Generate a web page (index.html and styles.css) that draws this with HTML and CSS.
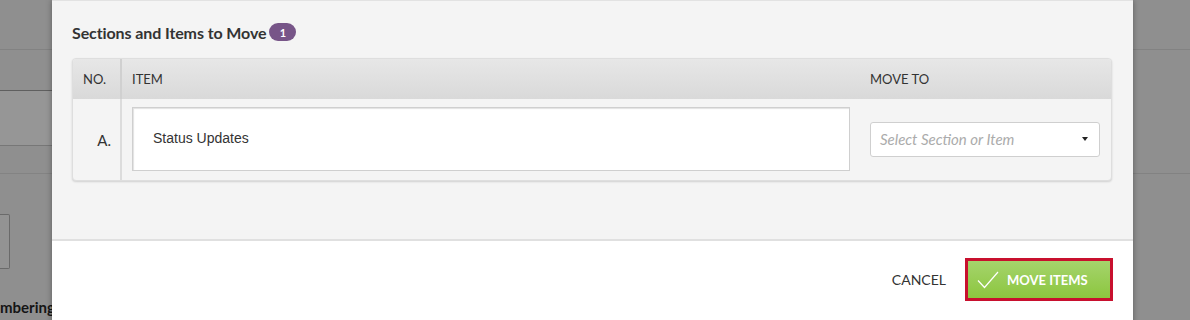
FILE: index.html
```html
<!DOCTYPE html>
<html>
<head>
<meta charset="utf-8">
<link rel="stylesheet" href="styles.css">
</head>
<body>
<div class="page">
  <div class="bg-left">
    <div class="bg-row r1"></div>
    <div class="bg-row r2"></div>
    <div class="bg-row r3"></div>
    <div class="bg-row r4"></div>
    <div class="bg-input"></div>
    <div class="bg-label">mbering</div>
  </div>
  <div class="bg-mid"></div>
  <div class="bg-right">
    <div class="bg-row r1"></div>
    <div class="bg-row rr2"></div>
  </div>
</div>

<div class="modal">
  <div class="modal-body">
    <div class="title">Sections and Items to Move <span class="badge">1</span></div>
    <div class="table">
      <div class="thead">
        <div class="cell c-no">NO.</div>
        <div class="cell c-item">ITEM</div>
        <div class="cell c-move">MOVE TO</div>
      </div>
      <div class="trow">
        <div class="cell c-no num">A.</div>
        <div class="cell c-item">
          <div class="item-box">Status Updates</div>
        </div>
        <div class="cell c-move">
          <div class="select">
            <span class="placeholder">Select Section or Item</span>
            <span class="caret"></span>
          </div>
        </div>
      </div>
    </div>
  </div>
  <div class="modal-footer">
    <span class="cancel">CANCEL</span>
    <div class="btn-outline">
      <div class="btn">
        <svg class="check" width="22" height="18" viewBox="0 0 22 18"><path d="M1 9.5 L7.5 16.5 L21 1" fill="none" stroke="#fff" stroke-width="1.2"/></svg>
        <span>MOVE ITEMS</span>
      </div>
    </div>
  </div>
</div>
</body>
</html>
```

FILE: styles.css
```css
html, body {
  margin: 0;
  padding: 0;
}
body {
  width: 1190px;
  height: 320px;
  overflow: hidden;
  background: #8f8f8f;
  font-family: Lato, "Open Sans", sans-serif;
  position: relative;
}
.page {
  display: flex;
  height: 320px;
}
.bg-left {
  width: 52px;
  display: flex;
  flex-direction: column;
  overflow: hidden;
}
.bg-mid { flex: 1; }
.bg-right {
  width: 57px;
  display: flex;
  flex-direction: column;
}
.bg-row { box-sizing: border-box; }
.r1 { height: 50px; border-bottom: 1px solid #828282; }
.r2 { height: 41px; border-bottom: 1px solid #5f5f5f; }
.r3 { height: 55px; background: #969696; border-bottom: 1px solid #777; }
.r4 { height: 28px; border-bottom: 1px solid #838383; }
.rr2 { height: 124px; border-bottom: 1px solid #828282; }
.bg-input {
  margin-top: 40px;
  width: 10px;
  height: 55px;
  box-sizing: border-box;
  border: 1px solid #6a6a6a;
  border-left: none;
  border-radius: 0 2px 2px 0;
  background: #939393;
}
.bg-label {
  margin-top: 29px;
  margin-left: 0;
  font-weight: 700;
  font-size: 15px;
  color: #151515;
  white-space: nowrap;
}

.modal {
  position: absolute;
  left: 52px;
  top: 0;
  width: 1081px;
  height: 330px;
  background: #fff;
  box-shadow: 0 0 6px rgba(0,0,0,0.35);
  display: flex;
  flex-direction: column;
}
.modal-body {
  background: #f4f4f4;
  height: 238px;
  border-top: 1px solid #e2e2e2;
  border-bottom: 2px solid #e0e0e0;
  padding: 0 21px 0 20px;
  box-sizing: content-box;
}
.title {
  margin-top: 20px;
  height: 22px;
  display: flex;
  align-items: center;
  font-weight: 700;
  font-size: 16px;
  color: #333;
  letter-spacing: -0.1px;
}
.badge {
  margin-left: 3px;
  width: 27px;
  height: 18px;
  border-radius: 9px;
  background: #775588;
  color: #fff;
  font-size: 11px;
  font-weight: 700;
  display: inline-flex;
  align-items: center;
  justify-content: center;
}
.table {
  margin-top: 15px;
  border: 1px solid #dedede;
  border-radius: 4px;
  box-shadow: 0 1px 2px rgba(0,0,0,0.15);
  overflow: hidden;
  background: #f4f4f4;
}
.thead {
  display: flex;
  height: 40px;
  background: linear-gradient(#e7e7e7, #d9d9d9);
  font-size: 13px;
  color: #333;
  align-items: stretch;
}
.trow {
  display: flex;
  height: 81px;
}
.cell {
  display: flex;
  align-items: center;
  box-sizing: border-box;
}
.c-no {
  width: 49px;
  padding-left: 10px;
  border-right: 2px solid #dcdcdc;
}
.thead .c-no { border-right-color: #d0d0d0; }
.c-item {
  width: 738px;
  padding: 0 10px;
}
.c-move {
  flex: 1;
  padding: 0 10px;
}
.num {
  justify-content: flex-end;
  padding-right: 9px;
  font-size: 15px;
  color: #333;
}
.item-box {
  width: 718px;
  height: 64px;
  margin-top: -1px;
  box-sizing: border-box;
  background: #fff;
  border: 1px solid #cfcfcf;
  box-shadow: inset 1px 1px 1px rgba(0,0,0,0.12);
  padding-left: 20px;
  padding-bottom: 2px;
  display: flex;
  align-items: center;
  font-family: "Liberation Sans", Arial, sans-serif;
  font-size: 14px;
  color: #333;
}
.select {
  width: 230px;
  height: 35px;
  box-sizing: border-box;
  background: #fff;
  border: 1px solid #cfcfcf;
  border-radius: 3px;
  display: flex;
  align-items: center;
  justify-content: space-between;
  padding: 0 11px 1px 9px;
}
.placeholder {
  font-style: italic;
  font-size: 15px;
  color: #ababab;
}
.caret {
  width: 0;
  height: 0;
  border-left: 3.5px solid transparent;
  border-right: 3.5px solid transparent;
  border-top: 4px solid #222;
}
.modal-footer {
  display: flex;
  justify-content: flex-end;
  align-items: center;
  padding: 17px 20px 0 0;
  height: 43px;
  gap: 19px;
}
.cancel {
  font-size: 14px;
  color: #333;
}
.btn-outline {
  width: 148px;
  height: 43px;
  box-sizing: border-box;
  border: 3px solid #c8102e;
}
.btn {
  height: 100%;
  background: linear-gradient(#a5d46c, #8cc63f);
  display: flex;
  align-items: center;
  color: #fff;
  font-weight: 700;
  font-size: 13px;
  padding-left: 9px;
  gap: 8px;
}
.check { display: block; }
```
